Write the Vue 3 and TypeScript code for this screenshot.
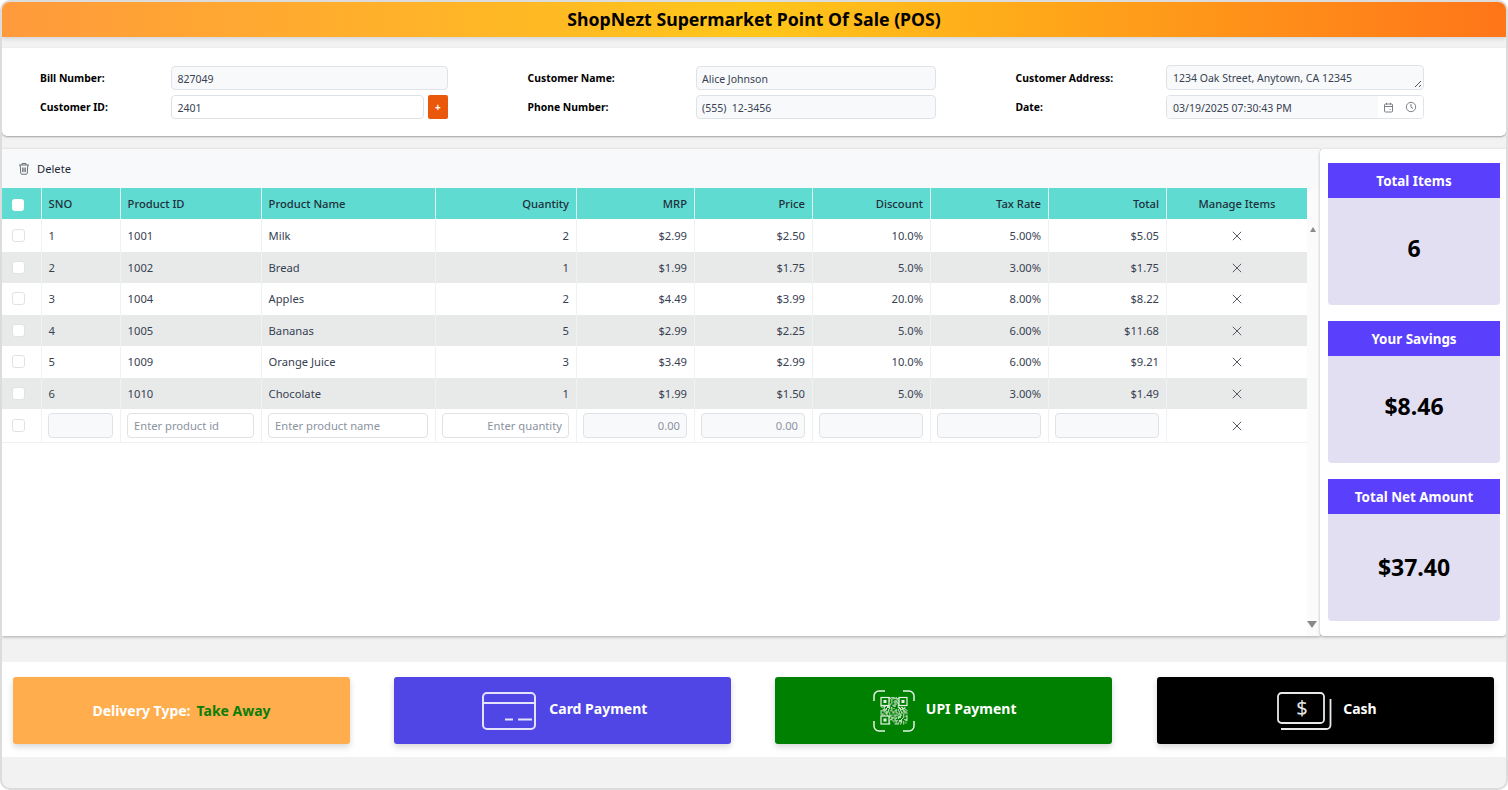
<script setup lang="ts">
interface Row { sno: number; id: string; name: string; qty: number; mrp: string; price: string; disc: string; tax: string; total: string }
const rows: Row[] = [
  { sno: 1, id: '1001', name: 'Milk', qty: 2, mrp: '$2.99', price: '$2.50', disc: '10.0%', tax: '5.00%', total: '$5.05' },
  { sno: 2, id: '1002', name: 'Bread', qty: 1, mrp: '$1.99', price: '$1.75', disc: '5.0%', tax: '3.00%', total: '$1.75' },
  { sno: 3, id: '1004', name: 'Apples', qty: 2, mrp: '$4.49', price: '$3.99', disc: '20.0%', tax: '8.00%', total: '$8.22' },
  { sno: 4, id: '1005', name: 'Bananas', qty: 5, mrp: '$2.99', price: '$2.25', disc: '5.0%', tax: '6.00%', total: '$11.68' },
  { sno: 5, id: '1009', name: 'Orange Juice', qty: 3, mrp: '$3.49', price: '$2.99', disc: '10.0%', tax: '6.00%', total: '$9.21' },
  { sno: 6, id: '1010', name: 'Chocolate', qty: 1, mrp: '$1.99', price: '$1.50', disc: '5.0%', tax: '3.00%', total: '$1.49' },
]
const summary = [
  { title: 'Total Items', value: '6', cls: 'tall-a' },
  { title: 'Your Savings', value: '$8.46', cls: 'tall-a' },
  { title: 'Total Net Amount', value: '$37.40', cls: 'tall-b' },
]
const qr: { x: number; y: number }[] = []
let seed = 7
for (let y = 0; y < 25; y++) {
  for (let x = 0; x < 25; x++) {
    seed = (seed * 131 + 17) % 1009
    const inFinder = (x < 8 && y < 8) || (x > 16 && y < 8) || (x < 8 && y > 16)
    if (!inFinder && seed % 2 === 0) qr.push({ x, y })
  }
}
</script>

<template>
  <div class="page">
    <header class="title">ShopNezt Supermarket Point Of Sale (POS)</header>

    <section class="info">
      <div class="group g1">
        <label>Bill Number:</label>
        <div class="field grey">827049</div>
        <label>Customer ID:</label>
        <div class="with-btn">
          <div class="field">2401</div>
          <button class="plus">+</button>
        </div>
      </div>
      <div class="group g2">
        <label>Customer Name:</label>
        <div class="field grey">Alice Johnson</div>
        <label>Phone Number:</label>
        <div class="field grey">(555)&nbsp; 12-3456</div>
      </div>
      <div class="group g3">
        <label>Customer Address:</label>
        <div class="field grey area">
          1234 Oak Street, Anytown, CA 12345
          <svg class="grip" width="8" height="8" viewBox="0 0 8 8"><path d="M1 7 7 1M5 7l2-2" stroke="#555" stroke-width="1" fill="none" /></svg>
        </div>
        <label>Date:</label>
        <div class="field date">
          <span class="date-text">03/19/2025 07:30:43 PM</span>
          <span class="date-icons">
            <svg width="11" height="11" viewBox="0 0 11 11" fill="none" stroke="#7b8088" stroke-width="1"><rect x="1.5" y="2" width="8" height="8" rx="1" /><path d="M1.5 4.5h8M3.500 .8v2M7.500 .8v2M6.500 7.500h1" /></svg>
            <svg width="12" height="12" viewBox="0 0 12 12" fill="none" stroke="#7b8088" stroke-width="1"><circle cx="6" cy="6" r="4.700" /><path d="M6 3v3.200l2 1.200" /></svg>
          </span>
        </div>
      </div>
    </section>

    <section class="main">
      <div class="grid-panel">
        <div class="toolbar">
          <svg width="12" height="13" viewBox="0 0 12 13" fill="none" stroke="#6b7078" stroke-width="1"><path d="M1 3h10M4 3V1.500h4V3M2.200 3l.6 8.500c0 .4.300.7.700.7h5c.4 0 .7-.3.7-.7L9.800 3M4.700 5.500v4.500M6 5.500v4.500M7.300 5.500v4.500" /></svg>
          <span>Delete</span>
        </div>
        <div class="table-wrap">
          <table>
            <colgroup>
              <col class="c-check" /><col class="c-sno" /><col class="c-id" /><col class="c-name" /><col class="c-qty" />
              <col class="c-num" /><col class="c-num" /><col class="c-num" /><col class="c-num" /><col class="c-num" /><col class="c-manage" />
            </colgroup>
            <thead>
              <tr>
                <th class="center chk"><span class="check head-check"></span></th>
                <th>SNO</th><th>Product ID</th><th>Product Name</th>
                <th class="right">Quantity</th><th class="right">MRP</th><th class="right">Price</th>
                <th class="right">Discount</th><th class="right">Tax Rate</th><th class="right">Total</th>
                <th class="center">Manage Items</th>
              </tr>
            </thead>
            <tbody>
              <tr v-for="r in rows" :key="r.sno">
                <td class="center chk"><span class="check"></span></td>
                <td>{{ r.sno }}</td><td>{{ r.id }}</td><td>{{ r.name }}</td>
                <td class="right">{{ r.qty }}</td><td class="right">{{ r.mrp }}</td><td class="right">{{ r.price }}</td>
                <td class="right">{{ r.disc }}</td><td class="right">{{ r.tax }}</td><td class="right">{{ r.total }}</td>
                <td class="center"><svg class="x" width="10" height="10" viewBox="0 0 10 10"><path d="M.8.800l8.400 8.400M9.200.800.800 9.200" stroke="#555b63" stroke-width="1" /></svg></td>
              </tr>
              <tr class="add">
                <td class="center chk"><span class="check"></span></td>
                <td><div class="cell-in grey"></div></td>
                <td><div class="cell-in ph">Enter product id</div></td>
                <td><div class="cell-in ph">Enter product name</div></td>
                <td><div class="cell-in ph r">Enter quantity</div></td>
                <td><div class="cell-in grey ph r">0.00</div></td>
                <td><div class="cell-in grey ph r">0.00</div></td>
                <td><div class="cell-in grey"></div></td>
                <td><div class="cell-in grey"></div></td>
                <td><div class="cell-in grey"></div></td>
                <td class="center"><svg class="x" width="10" height="10" viewBox="0 0 10 10"><path d="M.8.800l8.400 8.400M9.200.800.800 9.200" stroke="#555b63" stroke-width="1" /></svg></td>
              </tr>
            </tbody>
          </table>
          <div class="scroll">
            <span class="tri up"></span>
            <span class="tri down"></span>
          </div>
        </div>
      </div>
      <aside class="summary">
        <div v-for="s in summary" :key="s.title" class="stat" :class="s.cls">
          <div class="stat-head">{{ s.title }}</div>
          <div class="stat-body">{{ s.value }}</div>
        </div>
      </aside>
    </section>

    <section class="actions">
      <button class="act orange"><span>Delivery Type:</span><span class="take">Take Away</span></button>
      <button class="act indigo">
        <svg width="54" height="38" viewBox="0 0 54 38" fill="none" stroke="#e4e2fa" stroke-width="2"><rect x="1" y="1" width="52" height="36" rx="4" /><path d="M1 11h52M23 27.500h8M36 27.500h14" /></svg>
        <span class="lift">Card Payment</span>
      </button>
      <button class="act green">
        <svg width="42" height="42" viewBox="0 0 42 42" fill="none">
          <path d="M1 11V6a5 5 0 0 1 5-5h6M30 1h6a5 5 0 0 1 5 5v5M41 31v5a5 5 0 0 1-5 5h-6M12 41H6a5 5 0 0 1-5-5v-5" stroke="#e6f2e6" stroke-width="1.500" />
          <g stroke="#e6f2e6" stroke-width="1.200"><rect x="8" y="7.500" width="8" height="8" /><rect x="26" y="7.500" width="8" height="8" /><rect x="8" y="26" width="8" height="8" /></g>
          <g fill="#e6f2e6"><rect x="10.500" y="10" width="3" height="3" /><rect x="28.500" y="10" width="3" height="3" /><rect x="10.500" y="28.500" width="3" height="3" /></g>
          <g fill="#dcecdc"><rect v-for="(c, i) in qr" :key="i" :x="7.500 + c.x * 1.080" :y="7 + c.y * 1.100" width="1.080" height="1.100" /></g>
        </svg>
        <span class="lift">UPI Payment</span>
      </button>
      <button class="act black">
        <svg width="55" height="38" viewBox="0 0 55 38" fill="none" stroke="#e8e8e8" stroke-width="1.800">
          <rect x="1" y="1" width="46" height="30" rx="3.500" />
          <path d="M53.500 7v26a4 4 0 0 1-4 4H4" />
          <text x="25" y="23" text-anchor="middle" font-size="20" font-weight="400" fill="#e8e8e8" stroke="none">$</text>
        </svg>
        <span class="lift">Cash</span>
      </button>
    </section>
  </div>
</template>

<style>
html, body { margin: 0; background: #fff; }
</style>

<style scoped>
.page {
  box-sizing: border-box;
  width: 1508px;
  height: 790px;
  overflow: hidden;
  background: #f2f2f2;
  border: 2px solid #dcdcdc;
  border-radius: 10px;
  font-family: "Noto Sans", "Open Sans", sans-serif;
  font-size: 11.200px;
  color: #1f2937;
}
.title {
  height: 35px;
  background: linear-gradient(90deg, #ff9a3c 0%, #ffc61a 50%, #ff7519 100%);
  box-shadow: 0 2px 4px rgba(0, 0, 0, .12);
  text-align: center;
  font-size: 17.700px;
  font-weight: 700;
  color: #000;
  line-height: 35px;
}
.info {
  margin-top: 11px;
  height: 88px;
  box-sizing: border-box;
  padding: 18px 0 0 38px;
  background: #fff;
  border-radius: 0 0 5px 5px;
  box-shadow: 0 1px 2px rgba(0, 0, 0, .35);
  display: grid;
  grid-template-columns: 407.500px 408px 408px;
  column-gap: 80px;
}
.group { display: grid; grid-template-rows: 24px 24px; row-gap: 5px; align-items: center; }
.g1 { grid-template-columns: 130.500px 277px; }
.g2 { grid-template-columns: 168.500px 239.500px; }
.g3 { grid-template-columns: 150.500px 257.500px; }
label { font-weight: 700; font-size: 10.400px; color: #000; }
.field {
  box-sizing: border-box;
  height: 24px;
  padding: 0 5px;
  border: 1px solid #dfe2e7;
  border-radius: 4px;
  background: #fff;
  font-size: 10.500px;
  line-height: 24px;
  color: #374151;
  position: relative;
}
.g1 .field, .g3 .field { padding-left: 6px; }
.g3 .date { padding-left: 0; padding-right: 0; }
.grey { background: #f8f9fb; }
.area { height: 25px; margin-top: -1px; }
.grip { position: absolute; right: 1px; bottom: 1px; }
.with-btn { display: flex; gap: 4px; align-items: center; }
.with-btn .field { flex: 1; }
.plus {
  width: 19.500px; height: 24px; padding: 0;
  border: 0; border-radius: 2px;
  background: #ea580c;
  color: #fff; font: 700 10px "Noto Sans", sans-serif;
}
.date { display: flex; overflow: hidden; }
.date-text { flex: 1; padding-left: 6px; background: #f8f9fb; }
.date-icons { width: 45px; display: flex; align-items: center; justify-content: center; gap: 11px; background: #fff; }
.main { display: flex; margin-top: 13px; height: 487px; }
.grid-panel {
  width: 1318px;
  background: #fff;
  box-shadow: 0 1px 3px rgba(0, 0, 0, .3);
  display: flex;
  flex-direction: column;
}
.toolbar {
  height: 39px;
  flex: none;
  display: flex;
  align-items: center;
  gap: 7px;
  padding-left: 16px;
  box-sizing: border-box;
  background: #f8f9fb;
  font-size: 11.200px;
  color: #1f2937;
}
.table-wrap { flex: 1; display: flex; min-height: 0; }
table {
  width: 1305px;
  height: 0;
  table-layout: fixed;
  border-collapse: separate;
  border-spacing: 0;
}
.c-check { width: 40px; }
.c-sno { width: 79px; }
.c-id { width: 141px; }
.c-name { width: 174px; }
.c-qty { width: 141px; }
.c-num { width: 118px; }
.c-manage { width: 140px; }
th {
  height: 32px;
  box-sizing: border-box;
  padding: 0 7px 0 6.600px;
  background: #5fdbd1;
  border-right: 1px solid #dff5f2;
  border-bottom: 1px solid #fff;
  font-weight: 500;
  font-size: 11.200px;
  text-align: left;
  color: #1f2f3a;
}
th:last-child, td:last-child { border-right: 0; }
td {
  height: 31.500px;
  box-sizing: border-box;
  padding: 0 7px 0 6.600px;
  border-right: 1px solid #f0f1f3;
  font-size: 11.200px;
  color: #374151;
}
tbody tr:nth-child(even):not(.add) td { background: #e8eaea; }
tr.add td { height: 34px; border-bottom: 1px solid #eef0f2; }
.right { text-align: right; }
.center { text-align: center; }
th.center, td.center { padding: 0; }
th.chk, td.chk { padding-right: 7px; }
.check {
  display: inline-block;
  box-sizing: border-box;
  width: 13px; height: 13px;
  margin-top: -3px;
  border: 1px solid #dfe2e7;
  border-radius: 3px;
  background: #fff;
  vertical-align: middle;
}
.head-check { border: 0; margin-top: 0; width: 12px; height: 12px; }
.x { vertical-align: middle; margin-top: -2px; }
.cell-in {
  box-sizing: border-box;
  height: 25px;
  margin-left: -.6px;
  padding: 0 6px;
  border: 1px solid #dfe2e7;
  border-radius: 4px;
  line-height: 23px;
  white-space: nowrap;
  overflow: hidden;
}
.ph { color: #8b93a0; }
.r { text-align: right; }
.scroll {
  width: 13px;
  position: relative;
  background: #fbfbfb;
}
.tri { position: absolute; width: 0; height: 0; }
.up { left: 3px; top: 39px; border-left: 3.500px solid transparent; border-right: 3.500px solid transparent; border-bottom: 5px solid #8a8a8a; }
.down { left: 0; bottom: 8px; border-left: 5px solid transparent; border-right: 5px solid transparent; border-top: 7px solid #8a8a8a; }
.summary {
  width: 186px;
  box-sizing: border-box;
  padding: 14px 6px 15px 8px;
  background: #fff;
  border-radius: 4px 0 4px 4px;
  box-shadow: 0 1px 3px rgba(0, 0, 0, .3);
  display: flex;
  flex-direction: column;
  gap: 16px;
  position: relative;
}
.stat { display: flex; flex-direction: column; border-radius: 0 0 4px 4px; overflow: hidden; }
.tall-a { height: 142px; }
.tall-a .stat-body { padding-bottom: 8px; }
.tall-b { flex: 1; }
.tall-b .stat-body { padding-bottom: 2px; }
.stat-head {
  height: 35px;
  line-height: 37px;
  flex: none;
  background: #5a3ffc;
  color: #fff;
  text-align: center;
  font-size: 13.400px;
  font-weight: 700;
}
.stat-body {
  flex: 1;
  background: #e2dff2;
  display: flex;
  align-items: center;
  justify-content: center;
  font-size: 23px;
  font-weight: 700;
  color: #000;
}
.actions {
  margin-top: 26px;
  height: 95px;
  box-sizing: border-box;
  padding: 15px 12px 14px 11px;
  background: #fff;
  display: flex;
  justify-content: space-between;
}
.act {
  width: 337px;
  height: 67px;
  border: 0;
  border-radius: 3px;
  box-shadow: 0 3px 6px rgba(0, 0, 0, .16);
  display: flex;
  align-items: center;
  justify-content: center;
  gap: 13px;
  padding: 0;
  color: #fff;
  font: 700 14px "Noto Sans", "Open Sans", sans-serif;
}
.lift { margin-bottom: 5px; }
.orange { background: #ffad4d; gap: 6px; }
.take { color: #0a7d0a; }
.indigo { background: #4f46e5; padding-left: 4px; }
.green { background: #008000; margin-left: -1px; margin-right: 1px; padding-left: 3px; gap: 11px; }
.black { background: #000; padding-left: 3px; gap: 11px; }
</style>
